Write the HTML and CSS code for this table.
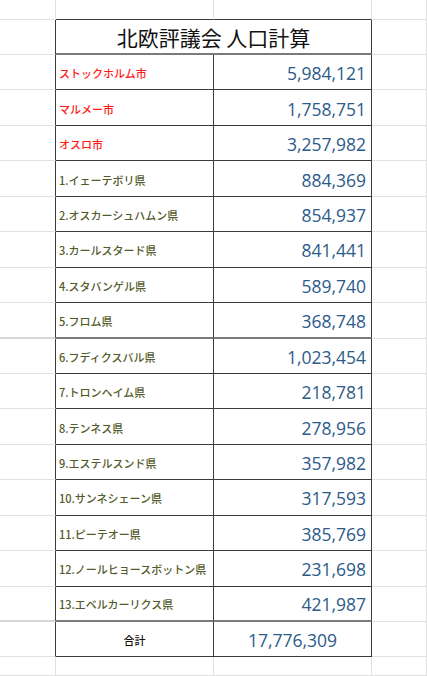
FILE: index.html
```html
<!DOCTYPE html>
<html lang="ja">
<head>
<meta charset="utf-8">
<title>北欧評議会 人口計算</title>
<link rel="stylesheet" href="styles.css">
</head>
<body>
<div class="sheet">
  <div class="c"></div><div class="c top"></div><div class="c top"></div><div class="c"></div>

  <div class="c edge"></div><div class="c title">北欧評議会 人口計算</div><div class="c"></div>

  <div class="c edge"></div><div class="c name city">ストックホルム市</div><div class="c num">5,984,121</div><div class="c"></div>
  <div class="c edge"></div><div class="c name city">マルメー市</div><div class="c num">1,758,751</div><div class="c"></div>
  <div class="c edge"></div><div class="c name city">オスロ市</div><div class="c num">3,257,982</div><div class="c"></div>
  <div class="c edge"></div><div class="c name">1.イェーテボリ県</div><div class="c num">884,369</div><div class="c"></div>
  <div class="c edge"></div><div class="c name">2.オスカーシュハムン県</div><div class="c num">854,937</div><div class="c"></div>
  <div class="c edge"></div><div class="c name">3.カールスタード県</div><div class="c num">841,441</div><div class="c"></div>
  <div class="c edge"></div><div class="c name">4.スタバンゲル県</div><div class="c num">589,740</div><div class="c"></div>
  <div class="c edge thick"></div><div class="c name thick">5.フロム県</div><div class="c num thick">368,748</div><div class="c"></div>
  <div class="c edge"></div><div class="c name">6.フディクスバル県</div><div class="c num">1,023,454</div><div class="c"></div>
  <div class="c edge"></div><div class="c name">7.トロンヘイム県</div><div class="c num">218,781</div><div class="c"></div>
  <div class="c edge"></div><div class="c name">8.テンネス県</div><div class="c num">278,956</div><div class="c"></div>
  <div class="c edge"></div><div class="c name">9.エステルスンド県</div><div class="c num">357,982</div><div class="c"></div>
  <div class="c edge"></div><div class="c name">10.サンネシェーン県</div><div class="c num">317,593</div><div class="c"></div>
  <div class="c edge"></div><div class="c name">11.ピーテオー県</div><div class="c num">385,769</div><div class="c"></div>
  <div class="c edge"></div><div class="c name">12.ノールヒョースボットン県</div><div class="c num">231,698</div><div class="c"></div>
  <div class="c edge thick"></div><div class="c name thick">13.エベルカーリクス県</div><div class="c num thick">421,987</div><div class="c"></div>

  <div class="c edge"></div><div class="c name total-label">合計</div><div class="c num total-num">17,776,309</div><div class="c"></div>

  <div class="c"></div><div class="c"></div><div class="c"></div><div class="c"></div>
</div>
</body>
</html>
```

FILE: styles.css
```css
html, body {
  margin: 0;
  padding: 0;
  background: #ffffff;
}

body {
  width: 427px;
  height: 676px;
  overflow: hidden;
  font-family: "Noto Sans CJK JP", "Noto Sans", sans-serif;
}

.sheet {
  display: grid;
  grid-template-columns: 56px 158px 158px 1fr;
  grid-template-rows: 20px 35px repeat(16, 35.4375px) 35px 1fr;
  height: 676px;
}

.c {
  box-sizing: border-box;
  border-right: 1px solid #e1e1e1;
  border-bottom: 1px solid #e1e1e1;
  display: flex;
  align-items: center;
  min-width: 0;
  white-space: nowrap;
}

.top {
  border-bottom-color: #3a3a3a;
}

.edge {
  border-right-color: #3a3a3a;
}

.title {
  grid-column: span 2;
  justify-content: center;
  font-size: 21px;
  color: #111111;
  border-right: 1px solid #3a3a3a;
  border-bottom: 2px solid #7a7a7a;
  padding-top: 1px;
}

.name {
  border-right-color: #3a3a3a;
  border-bottom-color: #3a3a3a;
  padding-left: 3px;
  font-size: 11px;
  font-weight: 500;
  color: #535b2b;
  padding-top: 2px;
}

.city {
  color: #ff1a1a;
}

.num {
  border-right-color: #3a3a3a;
  border-bottom-color: #3a3a3a;
  justify-content: flex-end;
  padding-right: 5px;
  padding-top: 2px;
  font-family: "Open Sans", "Noto Sans", sans-serif;
  font-size: 17.5px;
  font-weight: 500;
  color: #2d5b8a;
}

.thick {
  border-bottom: 2px solid #7a7a7a;
}

.edge.thick {
  border-bottom-color: #d6d6d6;
}

.total-label {
  justify-content: center;
  padding-left: 0;
  color: #111111;
  font-weight: 500;
}

.total-num {
  justify-content: center;
  padding-right: 0;
}
```
